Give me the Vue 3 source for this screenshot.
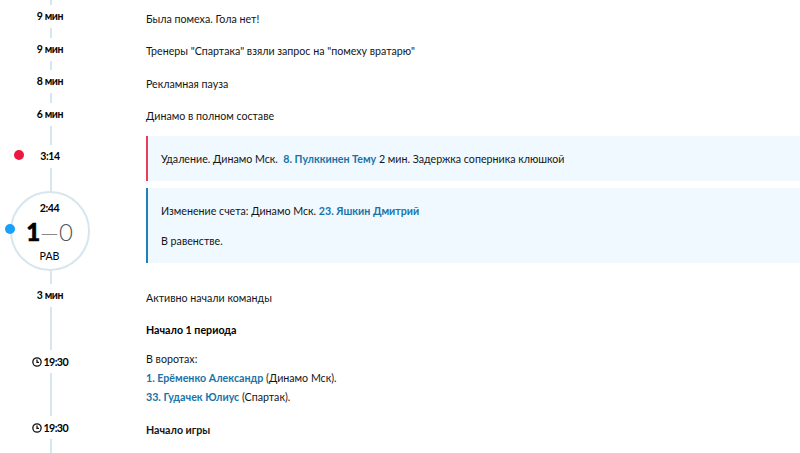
<script setup>
const marks = [
  { label: '9 мин', line: 10 },
  { label: '9 мин', line: 9 },
  { label: '8 мин', line: 10 },
  { label: '6 мин', line: 19 },
  { label: '3:14', line: 23, dot: true },
  { goal: true, label: '2:44', line: 13 },
  { label: '3 мин', line: 43 },
  { label: '19:30', line: 43, clock: true },
  { label: '19:30', line: 14, clock: true }
]
</script>

<template>
  <main class="feed">
    <aside class="track">
      <div class="line lead"></div>
      <template v-for="(m, i) in marks" :key="i">
        <div v-if="m.goal" class="goal">
          <b class="goal-time">{{ m.label }}</b>
          <div class="score"><b>1</b><span class="dash">—</span><span>0</span></div>
          <div class="state">РАВ</div>
          <i class="dot blue"></i>
        </div>
        <div v-else class="mark" :class="{ start: m.clock }">
          <svg v-if="m.clock" class="clock" viewBox="0 0 10 10">
            <circle cx="5" cy="5" r="4.15" />
            <path d="M5 2.4V5.3H7" />
          </svg>
          <b>{{ m.label }}</b>
          <i v-if="m.dot" class="dot red"></i>
        </div>
        <div class="line" :style="{ height: m.line + 'px' }"></div>
      </template>
    </aside>
    <section class="events">
      <p>Была помеха. Гола нет!</p>
      <p>Тренеры "Спартака" взяли запрос на "помеху вратарю"</p>
      <p>Рекламная пауза</p>
      <p>Динамо в полном составе</p>
      <div class="box penalty">Удаление. Динамо Мск. &nbsp;<a>8. Пулккинен Тему</a> 2 мин. Задержка соперника клюшкой</div>
      <div class="box scored">
        <div>Изменение счета: Динамо Мск. <a>23. Яшкин Дмитрий</a></div>
        <div>В равенстве.</div>
      </div>
      <p>Активно начали команды</p>
      <p class="heading">Начало 1 периода</p>
      <div class="keepers">
        <div>В воротах:</div>
        <div><a>1. Ерёменко Александр</a> (Динамо Мск).</div>
        <div><a>33. Гудачек Юлиус</a> (Спартак).</div>
      </div>
      <p><b>Начало игры</b></p>
    </section>
  </main>
</template>

<style>
body { margin: 0; background: #fff; }
</style>

<style scoped>
.feed {
  display: flex;
  height: 453px;
  overflow: hidden;
  font: 10.66px/19px Lato, "Liberation Sans", sans-serif;
  color: #151515;
}
.track {
  width: 100px;
  margin-right: 46px;
  flex: none;
  display: flex;
  flex-direction: column;
  align-items: center;
}
.line { width: 2px; flex: none; background: #d7e6ee; margin-left: 2px; }
.lead { height: 5px; }
.mark {
  position: relative;
  width: 100px;
  height: 23px;
  flex: none;
  display: flex;
  align-items: center;
  justify-content: center;
  gap: 2px;
  font-size: 10.5px;
  letter-spacing: -0.4px;
  color: #000;
}
.mark b { line-height: 23px; }
.start { gap: 1.5px; font-size: 10.66px; letter-spacing: -0.6px; }
.clock { width: 10px; height: 10px; fill: none; stroke: #111; stroke-width: 1.3; }
.goal {
  position: relative;
  box-sizing: border-box;
  width: 80px;
  height: 80px;
  margin-right: 1px;
  flex: none;
  border: 2px solid #d7e6ee;
  border-radius: 50%;
  display: flex;
  flex-direction: column;
  align-items: center;
  color: #000;
}
.goal-time { letter-spacing: -0.45px; line-height: 14px; margin-top: 8px; }
.score {
  display: flex;
  align-items: center;
  font-size: 24px;
  line-height: 33px;
  font-weight: 300;
  color: #555;
}
.score b { font-weight: 900; color: #000; -webkit-text-stroke: 0.6px #000; }
.dash { color: #888; }
.state { line-height: 13px; margin-top: 0.6px; }
.dot { position: absolute; width: 10px; height: 10px; border-radius: 50%; }
.red { left: 13.5px; top: 5px; background: #ec1840; }
.blue { left: -6.5px; top: 31px; background: #18a0fb; }
.events { flex: 1; min-width: 0; padding-top: 9px; white-space: nowrap; }
.events p { margin: 0 0 13.3px; }
.events a { color: #1a73a8; font-weight: 700; }
.box {
  box-sizing: border-box;
  background: #f0f9ff;
  padding: 13px 13px;
  border-left: 2px solid #ec3c5c;
}
.penalty { height: 45px; margin-top: -2.2px; padding-top: 12.5px; }
.scored {
  height: 75px;
  margin: 7px 0 25px;
  border-color: #2080b8;
  display: flex;
  flex-direction: column;
  gap: 11px;
}
.events .heading { font-weight: 700; color: #000; margin: -0.8px 0 10px; }
.keepers { margin-bottom: 14px; }
</style>
